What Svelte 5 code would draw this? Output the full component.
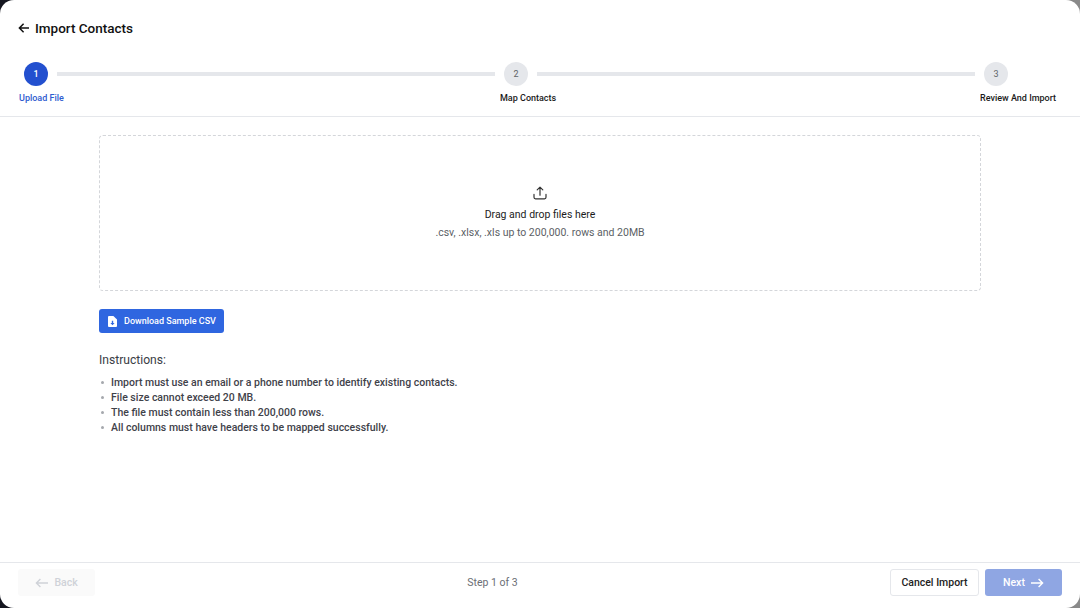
<script>
    let steps = [
        { num: 1, label: "Upload File", active: true },
        { num: 2, label: "Map Contacts", active: false },
        { num: 3, label: "Review And Import", active: false }
    ];
    let rules = [
        "Import must use an email or a phone number to identify existing contacts.",
        "File size cannot exceed 20 MB.",
        "The file must contain less than 200,000 rows.",
        "All columns must have headers to be mapped successfully."
    ];
</script>

<div class="backdrop">
    <div class="modal">
        <header class="title-row">
            <svg class="back-arrow" width="12" height="12" viewBox="0 0 12 12" fill="none" stroke="#111" stroke-width="1.5">
                <path d="M11 6H1.5M5.6 1.8 1.4 6l4.2 4.2" />
            </svg>
            <h1>Import Contacts</h1>
        </header>

        <div class="stepper">
            <div class="track">
                {#each steps as step, i}
                    {#if i > 0}<div class="line"></div>{/if}
                    <div class="circle" class:active={step.active}>{step.num}</div>
                {/each}
            </div>
            <div class="labels">
                {#each steps as step}
                    <div class="label" class:active={step.active}>{step.label}</div>
                {/each}
            </div>
        </div>

        <main class="content">
            <div class="dropzone">
                <svg width="14" height="14" viewBox="0 0 14 14" fill="none" stroke="#333" stroke-width="1.2" stroke-linecap="round" stroke-linejoin="round">
                    <path d="M7 9.2V1.2M4.2 3.9 7 1.1l2.8 2.8M1 8.4v2.9c0 .9.6 1.5 1.5 1.5h9c.9 0 1.5-.6 1.5-1.5V8.4" />
                </svg>
                <div class="drop-title">Drag and drop files here</div>
                <div class="drop-hint">.csv, .xlsx, .xls up to 200,000. rows and 20MB</div>
            </div>

            <button class="sample">
                <svg width="9" height="11" viewBox="0 0 9 11">
                    <path fill="#fff" d="M1 0h4.4L9 3.6V10a1 1 0 0 1-1 1H1a1 1 0 0 1-1-1V1a1 1 0 0 1 1-1z" />
                    <path fill="#2f66e0" d="M3.8 4.8h1.4v2.2h1.4L4.5 9.3 2.4 7h1.4z" />
                </svg>
                Download Sample CSV
            </button>

            <h2>Instructions:</h2>
            <ul>
                {#each rules as rule}
                    <li>{rule}</li>
                {/each}
            </ul>
        </main>

        <footer>
            <button class="btn back">
                <svg width="14" height="10" viewBox="0 0 14 10" fill="none" stroke="#cfd2d8" stroke-width="1.4">
                    <path d="M13 5H1.5M5.4 1 1.4 5l4 4" />
                </svg>
                Back
            </button>
            <div class="step-count">Step 1 of 3</div>
            <div class="actions">
                <button class="btn cancel">Cancel Import</button>
                <button class="btn next">
                    Next
                    <svg width="14" height="10" viewBox="0 0 14 10" fill="none" stroke="#fff" stroke-width="1.4">
                        <path d="M1 5h11.5M8.6 1l4 4-4 4" />
                    </svg>
                </button>
            </div>
        </footer>
    </div>
</div>

<style>
    :global(body) {
        margin: 0;
    }
    .backdrop {
        width: 1080px;
        height: 608px;
        background: linear-gradient(90deg, #14161f 0%, #14161f 30%, #8a8a8a 100%);
        overflow: hidden;
    }
    .modal {
        width: 1080px;
        height: 608px;
        background: #fff;
        border-radius: 14px;
        display: flex;
        flex-direction: column;
        font-family: Roboto, "Liberation Sans", sans-serif;
        color: #111;
    }
    .title-row {
        display: flex;
        align-items: center;
        gap: 5px;
        padding: 18px 18px 0;
        height: 20px;
    }
    .back-arrow {
        flex: none;
    }
    h1 {
        margin: 0;
        font-size: 13.5px;
        font-weight: 500;
        line-height: 20px;
    }
    .stepper {
        padding-top: 24px;
        height: 54px;
        border-bottom: 1px solid #e5e7eb;
    }
    .track {
        display: flex;
        align-items: center;
        padding: 0 72px 0 24px;
        gap: 9px;
    }
    .circle {
        width: 24px;
        height: 24px;
        border-radius: 50%;
        background: #e5e7eb;
        color: #5f6368;
        font-size: 9px;
        display: flex;
        align-items: center;
        justify-content: center;
        flex: none;
    }
    .circle.active {
        background: #2350cf;
        color: #fff;
        font-weight: 500;
    }
    .line {
        flex: 1;
        height: 4px;
        background: #e5e7eb;
    }
    .labels {
        display: grid;
        grid-template-columns: 481px 480px auto;
        padding-left: 19px;
        margin-top: 5px;
    }
    .label {
        font-size: 9px;
        font-weight: 500;
        line-height: 14px;
        color: #1a1a1a;
        white-space: nowrap;
    }
    .label.active {
        color: #2f5ccf;
    }
    .content {
        flex: 1;
        padding: 18px 99px 0;
    }
    .dropzone {
        height: 154px;
        border: 1px dashed #d4d6da;
        border-radius: 4px;
        display: flex;
        flex-direction: column;
        align-items: center;
        justify-content: center;
    }
    .drop-title {
        font-size: 10.5px;
        line-height: 16px;
        margin-top: 7px;
        color: #1c1c1c;
    }
    .drop-hint {
        font-size: 10.5px;
        line-height: 16px;
        margin-top: 2px;
        color: #5c5f66;
    }
    .sample {
        display: flex;
        align-items: center;
        gap: 7px;
        margin-top: 18px;
        width: 125px;
        height: 24px;
        padding: 0 0 0 9px;
        border: none;
        border-radius: 3px;
        background: #2f66e0;
        color: #fff;
        font: 500 9px Roboto, sans-serif;
        white-space: nowrap;
    }
    h2 {
        margin: 19px 0 0;
        font-size: 12.1px;
        font-weight: 400;
        line-height: 16px;
        color: #3a3d45;
    }
    ul {
        list-style: none;
        margin: 7px 0 0;
        padding: 0;
    }
    li {
        position: relative;
        padding-left: 12px;
        font-size: 10.5px;
        font-weight: 500;
        line-height: 15px;
        color: #3f424a;
    }
    li::before {
        content: "";
        position: absolute;
        left: 2px;
        top: 6px;
        width: 3px;
        height: 3px;
        border-radius: 50%;
        background: #a5a8ad;
    }
    footer {
        box-sizing: border-box;
        height: 46px;
        border-top: 1px solid #e5e7eb;
        display: flex;
        justify-content: space-between;
        align-items: center;
        padding: 0 18px 6px;
    }
    .btn {
        height: 27px;
        border-radius: 3px;
        font: 500 10.5px Roboto, sans-serif;
        display: flex;
        align-items: center;
        justify-content: center;
        gap: 5px;
        padding: 0;
    }
    .back {
        width: 77px;
        background: #fafafa;
        border: none;
        color: #cfd2d8;
    }
    .step-count {
        font-size: 10.5px;
        color: #6b6e75;
    }
    .actions {
        display: flex;
        gap: 6px;
    }
    .cancel {
        width: 89px;
        background: #fff;
        border: 1px solid #e5e7eb;
        color: #222;
    }
    .next {
        width: 77px;
        background: #8fa6e3;
        border: none;
        color: #fff;
    }
</style>
